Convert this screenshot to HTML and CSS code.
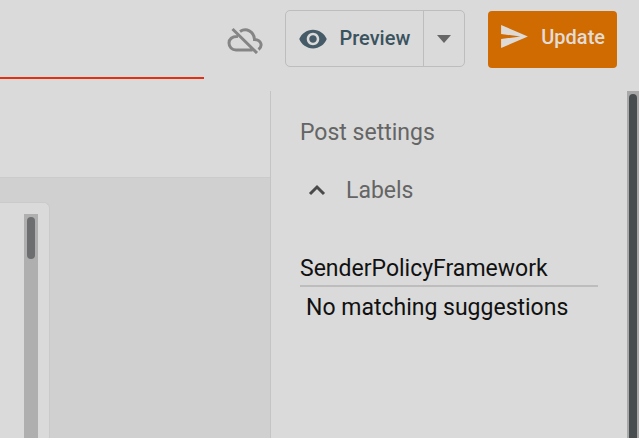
FILE: index.html
```html
<!DOCTYPE html>
<html lang="en">
<head>
    <meta charset="UTF-8">
    <meta name="viewport" content="width=device-width, initial-scale=1.0">
    <title>Edit post</title>
    <link rel="stylesheet" href="styles.css">
</head>
<body>
    <header class="topbar">
        <input type="text" class="title-input" aria-label="Title">
        <svg class="icon-cloud" viewBox="0 0 36 28" role="img" aria-label="Not saved">
            <path d="M5.500 3L30 27M13 5.500C19 1.500 27 5 27.500 13.500C34.500 14 36 20 31.500 23.500M11 10.500C5 10 2 13.500 2 17C2 21 5 24 9 24H25.500"/>
        </svg>
        <div class="preview-group">
            <button type="button" class="btn-preview">
                <svg class="icon-eye" viewBox="0 0 24 24" aria-hidden="true">
                    <path d="M12 4.500C7 4.500 2.730 7.610 1 12c1.730 4.390 6 7.500 11 7.500s9.270-3.110 11-7.500c-1.730-4.390-6-7.500-11-7.500zM12 17c-2.760 0-5-2.240-5-5s2.240-5 5-5 5 2.240 5 5-2.240 5-5 5zm0-8c-1.660 0-3 1.340-3 3s1.340 3 3 3 3-1.340 3-3-1.340-3-3-3z"/>
                </svg>
                <span>Preview</span>
            </button>
            <button type="button" class="btn-more" aria-label="More options">
                <svg class="icon-arrow" viewBox="0 0 14 8" aria-hidden="true">
                    <path d="M0 0h14L7 8z"/>
                </svg>
            </button>
        </div>
        <button type="button" class="btn-update">
            <svg class="icon-send" viewBox="2 3 21 18" aria-hidden="true">
                <path d="M2.010 21L23 12 2.010 3 2 10l15 2-15 2z"/>
            </svg>
            <span>Update</span>
        </button>
    </header>
    <div class="content">
        <main class="editor">
            <div class="toolbar"></div>
            <div class="canvas">
                <div class="sheet">
                    <div class="sheet-track">
                        <div class="sheet-thumb"></div>
                    </div>
                </div>
            </div>
        </main>
        <aside class="settings">
            <h2>Post settings</h2>
            <button type="button" class="section-toggle" aria-expanded="true">
                <svg class="icon-chevron" viewBox="0 0 18 12" aria-hidden="true">
                    <path d="M2 10l7-7 7 7"/>
                </svg>
                <span id="labels-title">Labels</span>
            </button>
            <input type="text" class="labels-input" aria-labelledby="labels-title" value="SenderPolicyFramework">
            <p class="suggestions">No matching suggestions</p>
        </aside>
        <div class="page-track">
            <div class="page-thumb"></div>
        </div>
    </div>
</body>
</html>
```

FILE: styles.css
```css
* {
    box-sizing: border-box;
}
body {
    margin: 0;
    min-height: 100vh;
    display: flex;
    flex-direction: column;
    background-color: #dadada;
    font-family: Roboto, sans-serif;
    font-size: 23px;
    color: #111;
}
button,
input {
    font-family: inherit;
    background: none;
    border: none;
    border-radius: 0;
    padding: 0;
    outline: none;
}
button {
    cursor: pointer;
}
.topbar {
    display: flex;
    align-items: flex-start;
    padding: 10px 22px 12px 0;
}
.title-input {
    flex: 1;
    min-width: 0;
    height: 69px;
    font-size: 23px;
    border-bottom: 2px solid #e62e12;
}
.icon-cloud {
    width: 36px;
    height: 28px;
    margin: 16px 22px 0 23px;
    fill: none;
    stroke: #858585;
    stroke-width: 3;
}
.preview-group {
    display: flex;
    height: 57px;
    border: 1px solid #bdbdbd;
    border-radius: 5px;
}
.btn-preview {
    display: flex;
    align-items: center;
    gap: 11px;
    padding: 0 13px 2px 12px;
    font-size: 20px;
    font-weight: 500;
    color: #3b535f;
}
.icon-eye {
    width: 30px;
    height: 30px;
    margin-top: 2px;
    fill: #455b67;
}
.btn-more {
    width: 41px;
    border-left: 1px solid #bdbdbd;
}
.icon-arrow {
    width: 14px;
    height: 8px;
    margin-top: 4px;
    fill: #666;
}
.btn-update {
    display: flex;
    align-items: center;
    gap: 13px;
    height: 57px;
    margin: 1px 0 0 23px;
    padding: 0 12px 6px 13px;
    border-radius: 4px;
    background-color: #d06b02;
    font-size: 20px;
    font-weight: 500;
    color: #e2dcd6;
}
.icon-send {
    width: 27px;
    height: 23px;
    fill: #dedad6;
}
.content {
    flex: 1;
    display: flex;
}
.editor {
    flex: 1;
    display: flex;
    flex-direction: column;
}
.toolbar {
    height: 87px;
    border-bottom: 1px solid #cbcbcb;
}
.canvas {
    flex: 1;
    display: flex;
    padding-top: 24px;
    background-color: #d0d0d0;
}
.sheet {
    display: flex;
    padding: 11px 11px 0 24px;
    background-color: #dadada;
    border: 1px solid #cacaca;
    border-width: 1px 1px 0 0;
    border-radius: 0 6px 0 0;
}
.sheet-track {
    width: 14px;
    padding: 3px;
    background-color: #afafaf;
}
.sheet-thumb {
    height: 42px;
    border-radius: 4px;
    background-color: #6c6e6f;
}
.settings {
    width: 357px;
    padding: 27px 29px;
    border-left: 1px solid #c4c4c4;
}
h2 {
    margin: 0;
    font-size: 23px;
    font-weight: 400;
    line-height: 30px;
    color: #656565;
}
.section-toggle {
    display: flex;
    align-items: center;
    gap: 20px;
    margin-top: 28px;
    padding-left: 8px;
    font-size: 23px;
    line-height: 30px;
    color: #656565;
}
.icon-chevron {
    width: 18px;
    height: 12px;
    margin-bottom: 2px;
    fill: none;
    stroke: #4a4a4a;
    stroke-width: 3;
}
.labels-input {
    display: block;
    width: 100%;
    height: 35px;
    margin-top: 46px;
    border-bottom: 2px solid #bdbdbd;
    font-size: 23px;
    color: #111;
}
.suggestions {
    margin: 6px 0 0;
    padding-left: 6px;
    line-height: 30px;
}
.page-track {
    width: 12px;
    padding: 3px 2px 0;
    background-color: #a8a8a8;
}
.page-thumb {
    height: 100%;
    border-radius: 4px 4px 0 0;
    background-color: #484d4f;
}
```
